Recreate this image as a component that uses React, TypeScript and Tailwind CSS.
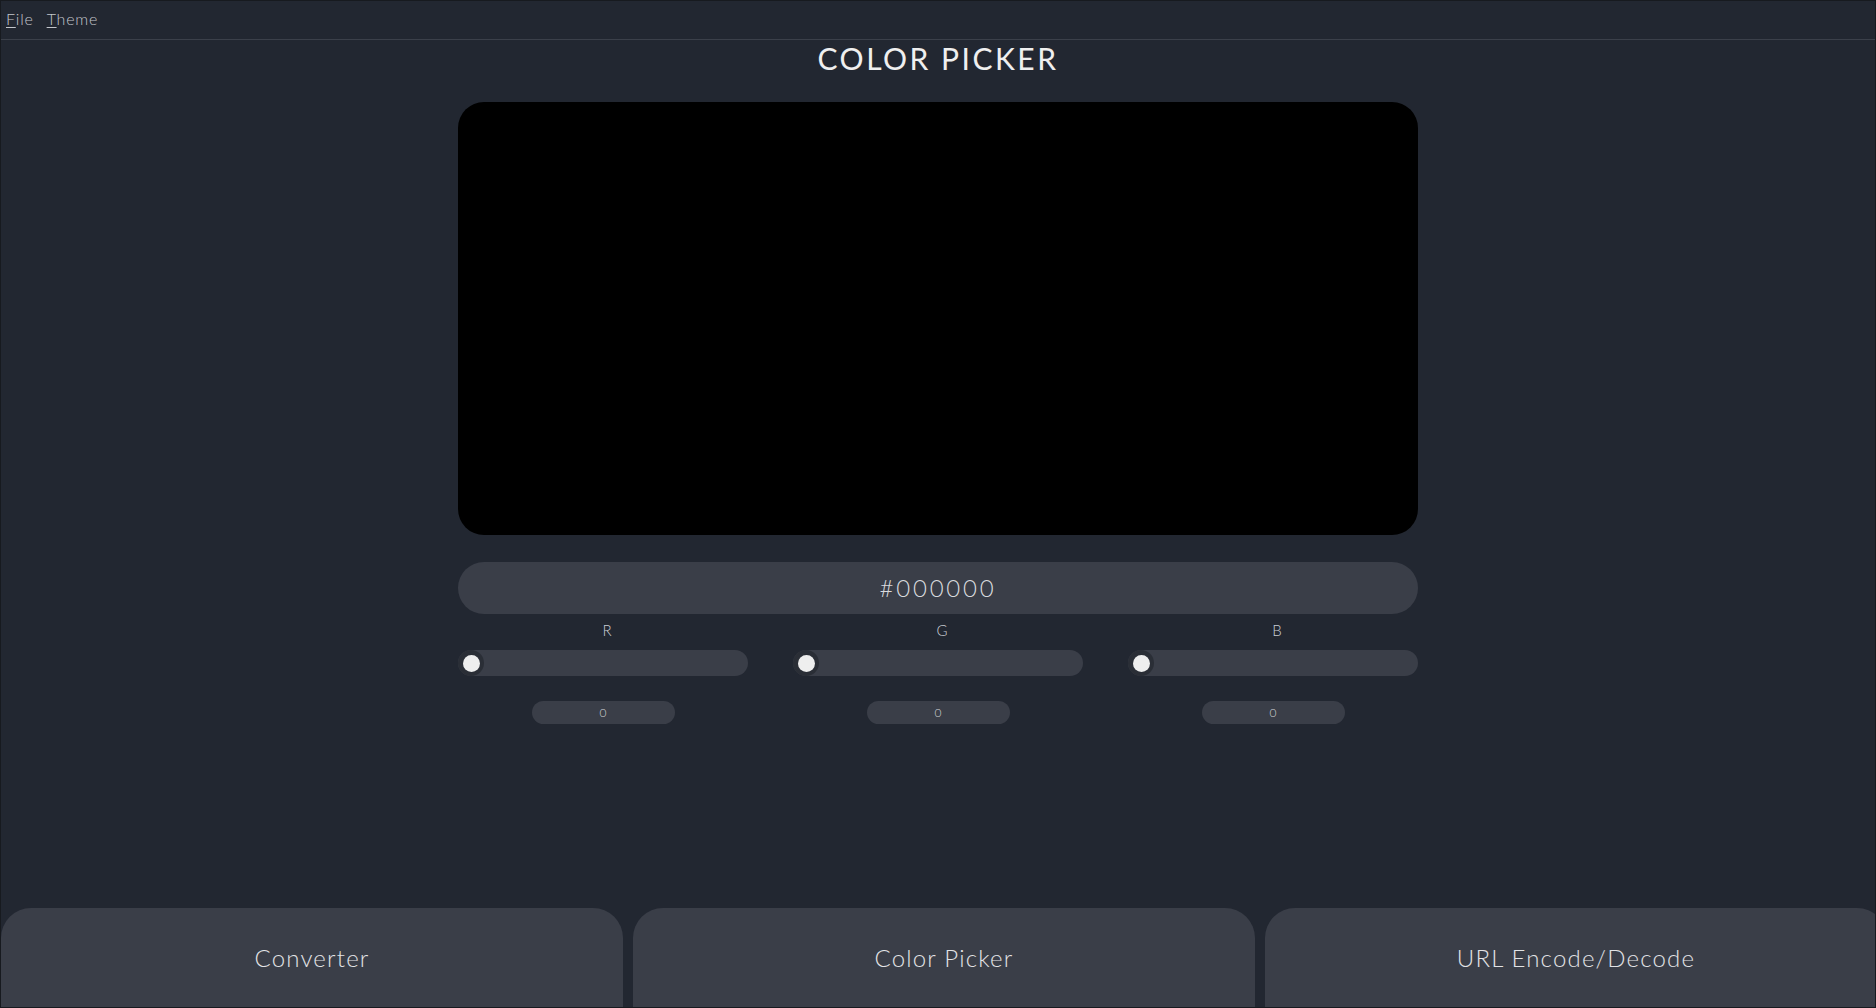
import React, { useState } from 'react';

const FONT = { fontFamily: 'Lato, "Open Sans", sans-serif' };

interface ChannelProps {
  label: string;
  value: number;
  onChange: (v: number) => void;
}

const Channel: React.FC<ChannelProps> = ({ label, value, onChange }) => {
  const pct = (value / 255) * 100;
  return (
    <div className="flex flex-col items-center w-[290px]">
      <span className="text-[15px] leading-[20px] text-[#c9ccd2] font-light h-[20px] ml-[8px]">{label}</span>
      {/* Slider track */}
      <div className="relative mt-[10px] w-full h-[26px] rounded-full bg-[#3a3e48]">
        <div
          className="absolute top-0 w-[26px] h-[26px] rounded-full bg-[#2a2e36] flex items-center justify-center"
          style={{ left: `calc(${pct}% - ${pct * 0.26}px)` }}
        >
          <div className="w-[17px] h-[17px] rounded-full bg-[#eeeeee]" />
        </div>
        <input
          type="range"
          min={0}
          max={255}
          value={value}
          onChange={e => onChange(Number(e.target.value))}
          className="absolute inset-0 w-full h-full opacity-0 cursor-pointer"
        />
      </div>
      <div className="mt-[25px] w-[143px] h-[23px] rounded-full bg-[#3a3e48] flex items-center justify-center text-[12px] text-[#d0d2d6] font-light">
        {value}
      </div>
    </div>
  );
};

export default function App() {
  const [r, setR] = useState(0);
  const [g, setG] = useState(0);
  const [b, setB] = useState(0);

  const hex =
    '#' + [r, g, b].map(v => v.toString(16).padStart(2, '0')).join('').toUpperCase();

  return (
    <div
      className="w-[1876px] h-[1008px] flex flex-col bg-[#222731] border border-[#171a1f] overflow-hidden"
      style={FONT}
    >
      {/* Menu bar */}
      <div className="h-[39px] shrink-0 flex items-center gap-[13px] px-[5px] pb-[2px] border-b border-[#3b404a] text-[16px] text-[#c3c6cc] font-light tracking-[0.8px]">
        <span><span className="underline underline-offset-2">F</span>ile</span>
        <span><span className="underline underline-offset-2">T</span>heme</span>
      </div>

      {/* Main */}
      <div className="flex-1 flex flex-col items-center">
        <h1 className="h-[40px] -mt-[2px] leading-[40px] text-[30px] text-[#efefef] tracking-[2.5px]">
          COLOR PICKER
        </h1>

        <div className="mt-[24px] w-[960px] h-[433px] rounded-[26px]" style={{ backgroundColor: hex }} />

        <div className="mt-[27px] w-[960px] h-[52px] rounded-full bg-[#3a3e48] flex items-center justify-center text-[24px] text-[#d8dade] font-light tracking-[2.8px]">
          {hex}
        </div>

        <div className="mt-[6px] w-[960px] flex justify-between">
          <Channel label="R" value={r} onChange={setR} />
          <Channel label="G" value={g} onChange={setG} />
          <Channel label="B" value={b} onChange={setB} />
        </div>
      </div>

      {/* Bottom navigation */}
      <div className="h-[99px] shrink-0 flex gap-[10px]">
        {['Converter', 'Color Picker', 'URL Encode/Decode'].map(name => (
          <button
            key={name}
            className="w-[622px] shrink-0 h-[130px] rounded-[30px] bg-[#3a3e48] text-[24px] text-[#e2e3e6] font-light tracking-[1.2px] flex justify-center pt-[32px]"
          >
            {name}
          </button>
        ))}
      </div>
    </div>
  );
}
